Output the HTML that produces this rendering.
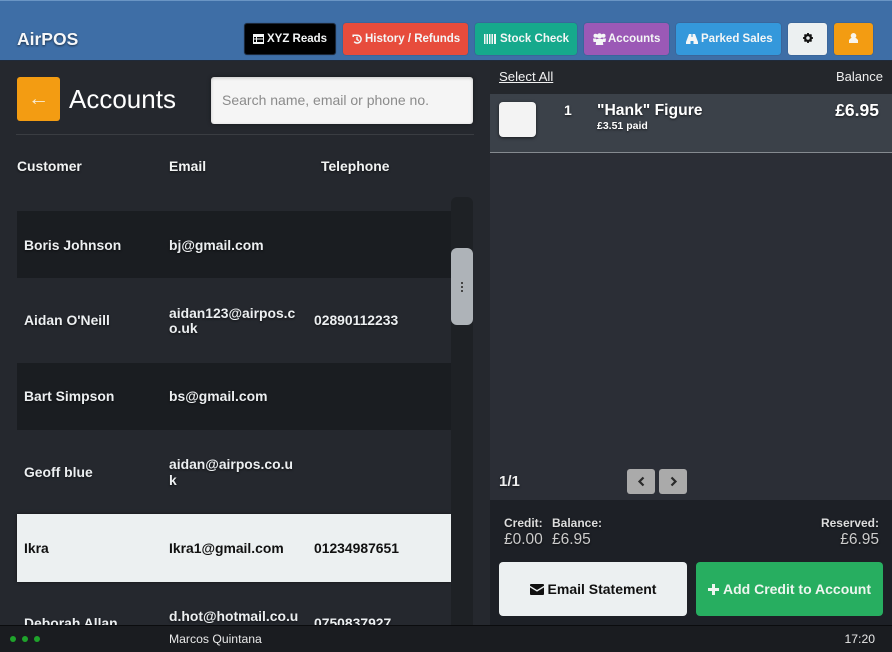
<!DOCTYPE html>
<html><head><meta charset="utf-8"><style>
*{box-sizing:border-box}
html,body{margin:0;padding:0;width:892px;height:652px;overflow:hidden;background:#272a30;font-family:"Liberation Sans",sans-serif;color:#fff}
.a{position:absolute;white-space:nowrap}
.b{position:absolute;top:23px;height:32px;border-radius:3px;font-weight:bold;font-size:11.5px;line-height:32px;text-align:left;padding-left:9px;white-space:nowrap;color:#f4f6f6;box-shadow:0 0 1px rgba(0,0,0,.4)}
.b svg{vertical-align:-2px}
.r{position:absolute;left:17px;width:434px}
.t{position:absolute;font-weight:bold;font-size:13.9px;line-height:16px;white-space:nowrap;color:#eceff1;text-shadow:0 1px 2px rgba(0,0,0,.6)}
.h{font-weight:bold;font-size:13.9px;color:#f2f4f4;text-shadow:0 1px 2px rgba(0,0,0,.6);line-height:16px}
.s{text-shadow:0 1px 2px rgba(0,0,0,.6)}
</style></head><body>
<div class="a" style="left:0;top:0;width:892px;height:61px;background:#3e6ea6;border-top:1px solid #6a95c4;border-bottom:1px solid #1f2a3a"></div>
<div class="a s" style="left:17px;top:29px;font-size:17.5px;font-weight:bold;line-height:20px;color:#f5f7f9">AirPOS</div>

<div class="b" style="left:244px;width:92px;background:#000;border:1px solid #1b2738;padding-left:8px;line-height:30px"><svg width="11" height="10" viewBox="0 0 11 10" style="margin-right:3px"><path fill="#f4f6f6" d="M0 0h11v10H0zM1 3v1.500h2V3zm3 0v1.500h6V3zM1 5.500V8h2V5.500zm3 0V8h6V5.500z" fill-rule="evenodd"/></svg>XYZ Reads</div>
<div class="b" style="left:343px;width:125px;background:#e74c3c"><svg width="10" height="10" viewBox="0 0 10 10" style="margin-right:3px"><path fill="none" stroke="#f4f6f6" stroke-width="1.500" d="M.5 1.200h4.700a3.900 3.900 0 1 1-3 6.400M5 2.800v2.700l1.800 1.100M1.200 .5v2.500"/></svg>History / Refunds</div>
<div class="b" style="left:475px;width:102px;background:#16a98c"><svg width="12" height="10" viewBox="0 0 12 10" style="margin-right:4px"><path fill="#f4f6f6" d="M0 0h1.500v10H0zM2.500 0h1.500v10H2.500zM5 0h1.500v10H5zM7.500 0h1.500v10H7.500zM10 0h2v10h-2z"/></svg>Stock Check</div>
<div class="b" style="left:584px;width:85px;background:#9b59b6"><svg width="13" height="12" viewBox="0 0 13 12" style="margin-right:2px;vertical-align:-3px"><circle cx="2.500" cy="2.700" r="2" fill="#f4f6f6"/><circle cx="10.500" cy="2.700" r="2" fill="#f4f6f6"/><circle cx="6.500" cy="3" r="2.700" fill="#f4f6f6"/><path fill="#f4f6f6" d="M0 5.500h3l1 3.500H0.500zM10 5.500h3l-.500 3.500H9zM3.500 6h6l.8 6H2.700z"/></svg>Accounts</div>
<div class="b" style="left:676px;width:105px;background:#3498db;padding-left:10px"><svg width="12" height="10" viewBox="0 0 12 10" style="margin-right:3px"><path fill="#f4f6f6" d="M3 0h2.500v3h1V0H9l3 8v2H7.500V7h-3v3H0V8z"/></svg>Parked Sales</div>
<div class="b" style="left:788px;width:39px;background:#ecf0f1;color:#111;padding-left:15px"><svg style="vertical-align:-1px" width="10" height="10" viewBox="0 0 10 10"><circle cx="5" cy="5" r="2.900" fill="none" stroke="#111" stroke-width="2.300"/><path stroke="#111" stroke-width="1.800" d="M5 0v10M0 5h10M1.500 1.500l7 7M8.500 1.500l-7 7" stroke-dasharray="1.800 6.400"/></svg></div>
<div class="b" style="left:834px;width:39px;background:#f39c12;padding-left:15px"><svg style="vertical-align:-1px" width="9" height="10" viewBox="0 0 9 10"><circle cx="4.500" cy="2.800" r="2.800" fill="#f8f4ea"/><path fill="#f8f4ea" d="M0 7 2 5h5l2 2v3H0z"/></svg></div>

<!-- left -->
<div class="a" style="left:0;top:61px;width:490px;height:564px;background:#25282e"></div>
<div class="a" style="left:17px;top:77px;width:43px;height:44px;background:#f39c12;border-radius:3px;text-align:center;font-size:21px;line-height:43px;color:#f8ecd2">←</div>
<div class="a" style="left:69px;top:83px;font-size:26px;line-height:32px;color:#fff">Accounts</div>
<div class="a" style="left:211px;top:77px;width:262px;height:47px;background:#f5f5f5;border-radius:3px;box-shadow:inset 0 1px 3px rgba(0,0,0,.2),0 0 4px rgba(0,0,0,.4);font-size:14px;line-height:47px;padding-left:11px;color:#8b8b8b">Search name, email or phone no.</div>
<div class="a" style="left:16px;top:134px;width:458px;height:1px;background:#3a3d42"></div>
<div class="a h" style="left:17px;top:158px">Customer</div>
<div class="a h" style="left:169px;top:158px">Email</div>
<div class="a h" style="left:321px;top:158px">Telephone</div>

<div class="r" style="top:211px;height:67px;background:#1a1d21"></div>
<div class="r" style="top:363px;height:67px;background:#1a1d21"></div>
<div class="r" style="top:514px;height:68px;background:#ecf0f1;box-shadow:0 0 3px rgba(0,0,0,.5)"></div>

<div class="t" style="left:24px;top:237px">Boris Johnson</div>
<div class="t" style="left:169px;top:237px">bj@gmail.com</div>
<div class="t" style="left:24px;top:312px">Aidan O'Neill</div>
<div class="t" style="left:169px;top:306px;line-height:15px">aidan123@airpos.c<br>o.uk</div>
<div class="t" style="left:314px;top:312px">02890112233</div>
<div class="t" style="left:24px;top:388px">Bart Simpson</div>
<div class="t" style="left:169px;top:388px">bs@gmail.com</div>
<div class="t" style="left:24px;top:464px">Geoff blue</div>
<div class="t" style="left:169px;top:456px">aidan@airpos.co.u<br>k</div>
<div class="t" style="left:24px;top:540px;color:#111;text-shadow:none">Ikra</div>
<div class="t" style="left:169px;top:540px;color:#111;text-shadow:none">Ikra1@gmail.com</div>
<div class="t" style="left:314px;top:540px;color:#111;text-shadow:none">01234987651</div>
<div class="t" style="left:24px;top:615px">Deborah Allan</div>
<div class="t" style="left:169px;top:608px">d.hot@hotmail.co.u</div>
<div class="t" style="left:314px;top:615px">0750837927</div>

<div class="a" style="left:451px;top:197px;width:22px;height:428px;background:#1e2125;border-radius:6px 6px 0 0"></div>
<div class="a" style="left:451px;top:248px;width:22px;height:77px;background:#aeb3b8;border-radius:6px"></div>
<div class="a" style="left:461px;top:282px;width:2px;height:2px;background:#444;box-shadow:0 4px 0 #444,0 8px 0 #444"></div>

<!-- right -->
<div class="a" style="left:490px;top:61px;width:402px;height:564px;background:#2b2e36"></div>
<div class="a" style="left:490px;top:61px;width:402px;height:33px;background:#24272c"></div>
<div class="a" style="left:499px;top:69px;font-size:13.200px;line-height:16px;text-decoration:underline;color:#f2f2f2">Select All</div>
<div class="a" style="right:9px;top:69px;font-size:13px;line-height:16px;color:#eee">Balance</div>
<div class="a" style="left:490px;top:94px;width:402px;height:59px;background:#3b4149;border-bottom:1px solid #858a90"></div>
<div class="a" style="left:499px;top:102px;width:37px;height:35px;background:#f3f3f3;border-radius:4px;box-shadow:0 1px 3px rgba(0,0,0,.6)"></div>
<div class="a s" style="left:564px;top:102px;font-size:14px;font-weight:bold;line-height:16px">1</div>
<div class="a s" style="left:597px;top:101px;font-size:15.700px;font-weight:bold;line-height:19px">"Hank" Figure</div>
<div class="a s" style="left:597px;top:120px;font-size:10.500px;font-weight:bold;line-height:13px">£3.51 paid</div>
<div class="a s" style="right:13px;top:100px;font-size:17.500px;font-weight:bold;line-height:20px">£6.95</div>

<div class="a s" style="left:499px;top:473px;font-size:15px;font-weight:bold;line-height:18px;color:#eee">1/1</div>
<div class="a" style="left:627px;top:469px;width:28px;height:25px;background:#aaa;border-radius:3px"><svg width="28" height="25" viewBox="0 0 28 25"><path d="M16.500 8.500l-4 4 4 4" fill="none" stroke="#2a2a2a" stroke-width="2.200"/></svg></div>
<div class="a" style="left:659px;top:469px;width:28px;height:25px;background:#aaa;border-radius:3px"><svg width="28" height="25" viewBox="0 0 28 25"><path d="M12.500 8.500l4 4-4 4" fill="none" stroke="#2a2a2a" stroke-width="2.200"/></svg></div>

<div class="a" style="left:490px;top:500px;width:402px;height:125px;background:#1d2026"></div>
<div class="a s" style="left:504px;top:516px;font-size:12px;font-weight:bold;line-height:14px;color:#ddd">Credit:</div>
<div class="a s" style="left:552px;top:516px;font-size:12px;font-weight:bold;line-height:14px;color:#ddd">Balance:</div>
<div class="a s" style="right:13px;top:516px;font-size:12px;font-weight:bold;line-height:14px;color:#ddd">Reserved:</div>
<div class="a s" style="left:504px;top:531px;font-size:15.500px;line-height:18px;color:#ccc">£0.00</div>
<div class="a s" style="left:552px;top:531px;font-size:15.500px;line-height:18px;color:#ccc">£6.95</div>
<div class="a s" style="right:13px;top:531px;font-size:15.500px;line-height:18px;color:#ccc">£6.95</div>
<div class="a" style="left:499px;top:562px;width:188px;height:54px;background:#ecf0f1;border-radius:4px;font-size:14px;font-weight:bold;line-height:54px;text-align:center;color:#111"><svg width="14" height="11" viewBox="0 0 14 11" style="vertical-align:-1px;margin-right:4px"><path fill="#111" d="M1 0h12a1 1 0 0 1 1 1v.8L7 6 0 1.800V1a1 1 0 0 1 1-1zM0 3.400 7 7.600l7-4.200V10a1 1 0 0 1-1 1H1a1 1 0 0 1-1-1z"/></svg>Email Statement</div>
<div class="a" style="left:696px;top:562px;width:187px;height:54px;background:#27ae60;border-radius:4px;font-size:14px;font-weight:bold;line-height:54px;text-align:center;color:#eef5ef"><svg width="11" height="11" viewBox="0 0 11 11" style="vertical-align:-1px;margin-right:4px"><path fill="#eef5ef" d="M4 0h3v4h4v3H7v4H4V7H0V4h4z"/></svg>Add Credit to Account</div>

<!-- footer -->
<div class="a" style="left:0;top:625px;width:892px;height:27px;background:#1a1c20;border-top:1px solid #0b0c0e"></div>
<div class="a" style="left:10px;top:636px;width:6px;height:6px;border-radius:50%;background:#1fa32b"></div>
<div class="a" style="left:22px;top:636px;width:6px;height:6px;border-radius:50%;background:#1fa32b"></div>
<div class="a" style="left:34px;top:636px;width:6px;height:6px;border-radius:50%;background:#1fa32b"></div>
<div class="a" style="left:169px;top:631px;font-size:12.200px;line-height:16px;color:#e8e8e8">Marcos Quintana</div>
<div class="a" style="right:17px;top:631px;font-size:12.200px;line-height:16px;color:#e8e8e8">17:20</div>
</body></html>
